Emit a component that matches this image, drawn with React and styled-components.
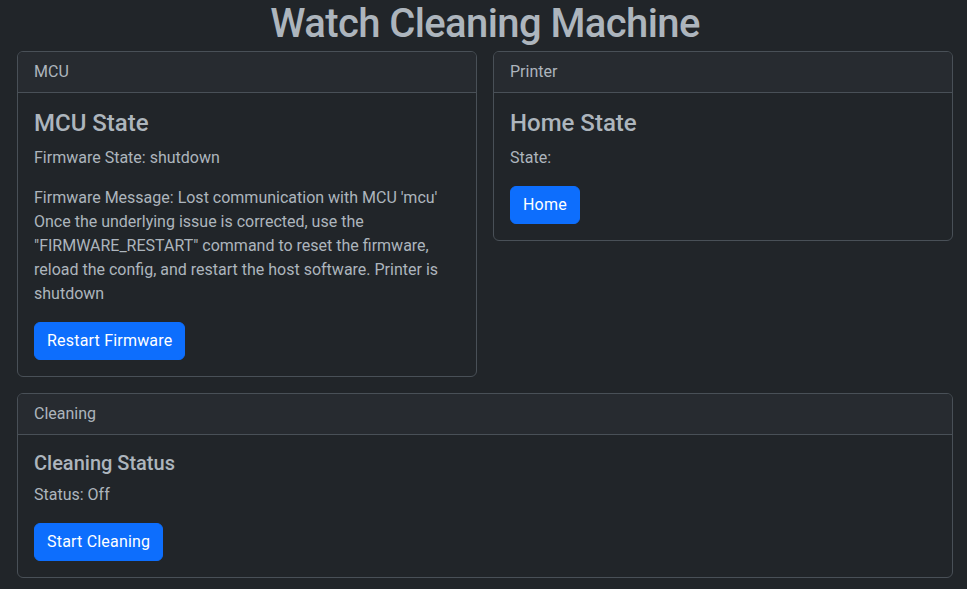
import React from "react";
import styled, { createGlobalStyle } from "styled-components";

const Global = createGlobalStyle`
  html, body { margin: 0; padding: 0; background: #212529; }
  body {
    font-family: Roboto, "Liberation Sans", sans-serif;
    color: #adb5bd;
    font-size: 16px;
    line-height: 1.5;
  }
  * { box-sizing: border-box; }
`;

const Page = styled.div`
  padding: 0 14px 0 17px;
`;

const Title = styled.h1`
  margin: 0 0 3px;
  font-size: 40px;
  font-weight: 500;
  line-height: 48px;
  letter-spacing: -0.6px;
  text-align: center;
  color: #adb5bd;
`;

const Grid = styled.div`
  display: grid;
  grid-template-columns: 1fr 1fr;
  gap: 16px;
  align-items: start;
  margin-bottom: 16px;
`;

const Card = styled.section`
  border: 1px solid #495057;
  border-radius: 6px;
  background: #212529;
  overflow: hidden;
`;

const CardHeader = styled.div`
  padding: 8px 16px;
  line-height: 24px;
  background: #272b30;
  border-bottom: 1px solid #495057;
`;

const CardBody = styled.div`
  padding: 16px;
`;

const CardTitle = styled.h4`
  margin: 0 0 8px;
  font-weight: 500;
  font-size: ${(p) => (p.$small ? "20px" : "24px")};
  line-height: 1.2;
`;

const Text = styled.p`
  margin: 0 0 16px;
`;

const Button = styled.button`
  display: inline-block;
  font-family: inherit;
  font-size: 16px;
  line-height: 24px;
  letter-spacing: 0.2px;
  padding: 6px 12px;
  border: 1px solid #0d6efd;
  border-radius: 6px;
  background: #0d6efd;
  color: #fff;
  cursor: pointer;
`;

export default function App() {
  return (
    <>
      <Global />
      <Page>
        <Title>Watch Cleaning Machine</Title>
        <Grid>
          <Card>
            <CardHeader>MCU</CardHeader>
            <CardBody>
              <CardTitle>MCU State</CardTitle>
              <Text>Firmware State: shutdown</Text>
              <Text>
                Firmware Message: Lost communication with MCU 'mcu' Once the
                underlying issue is corrected, use the "FIRMWARE_RESTART"
                command to reset the firmware, reload the config, and restart
                the host software. Printer is shutdown
              </Text>
              <Button>Restart Firmware</Button>
            </CardBody>
          </Card>
          <Card>
            <CardHeader>Printer</CardHeader>
            <CardBody>
              <CardTitle>Home State</CardTitle>
              <Text>State: </Text>
              <Button>Home</Button>
            </CardBody>
          </Card>
        </Grid>
        <Card>
          <CardHeader>Cleaning</CardHeader>
          <CardBody>
            <CardTitle $small>Cleaning Status</CardTitle>
            <Text>Status: Off</Text>
            <Button>Start Cleaning</Button>
          </CardBody>
        </Card>
      </Page>
    </>
  );
}
